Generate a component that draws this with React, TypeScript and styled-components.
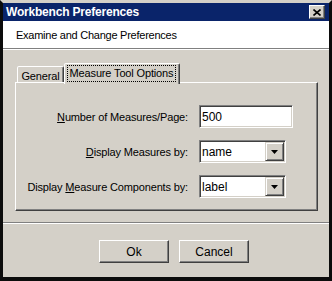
import React from "react";
import styled, { createGlobalStyle } from "styled-components";

const Global = createGlobalStyle`
  html, body { margin: 0; padding: 0; background: #d4d0c8; }
  body { font-family: "Liberation Sans", Arial, sans-serif; font-size: 11px; color: #000; letter-spacing: -0.15px; }
`;

const Window = styled.div`
  width: 332px;
  height: 281px;
  box-sizing: border-box;
  background: #d4d0c8;
  border-style: solid;
  border-width: 3px 3px 4px 3px;
  border-color: #d4d0c8 #0c0c0c #0c0c0c #0c0c0c;
  display: flex;
  flex-direction: column;
`;

const TitleBar = styled.div`
  height: 18px;
  flex: none;
  background: #0a246a;
  color: #fff;
  display: flex;
  align-items: center;
  justify-content: space-between;
  padding: 0 4px 0 3px;
  font-weight: bold;
  font-size: 12px;
  letter-spacing: -0.2px;
`;

const CloseButton = styled.div`
  width: 16px;
  height: 14px;
  box-sizing: border-box;
  background: #d4d0c8;
  border-style: solid;
  border-width: 1px;
  border-color: #fff #404040 #404040 #fff;
  box-shadow: inset -1px -1px #808080;
  display: flex;
  align-items: center;
  justify-content: center;
`;

const Header = styled.div`
  height: 28px;
  flex: none;
  box-sizing: border-box;
  background: #fff;
  padding-left: 13px;
  display: flex;
  align-items: center;
  border-bottom: 1px solid #808080;
  box-shadow: 0 1px #fff;
  letter-spacing: -0.25px;
`;

const Content = styled.div`
  padding: 14px 11px 0 12px;
  display: flex;
  flex-direction: column;
`;

const TabRow = styled.div`
  height: 19px;
  padding-left: 2px;
  display: flex;
  align-items: flex-end;
`;

const Tab = styled.div<{ $active?: boolean }>`
  box-sizing: border-box;
  height: ${(p) => (p.$active ? "21px" : "16px")};
  margin-bottom: ${(p) => (p.$active ? "-2px" : "0")};
  position: relative;
  z-index: ${(p) => (p.$active ? 1 : 0)};
  background: #d4d0c8;
  border-style: solid;
  border-width: 1px 1px 0 1px;
  border-color: #fff #404040 transparent #fff;
  border-radius: 2px 2px 0 0;
  box-shadow: inset -1px 0 #808080;
  display: flex;
  align-items: flex-start;
  justify-content: center;
  padding: ${(p) => (p.$active ? "2px 2px 0 1px" : "3px 4px 0 4px")};
  ${(p) => (p.$active ? "width: 116px;" : "width: 47px;")}
`;

const FocusLabel = styled.span`
  outline: 1px dotted #000;
  outline-offset: 0;
  padding: 1px 2px 1px 2px;
  line-height: 13px;
`;

const TabLabel = styled.span`
  line-height: 13px;
`;

const Panel = styled.div`
  height: 129px;
  box-sizing: border-box;
  border-style: solid;
  border-width: 1px;
  border-color: #fff #404040 #404040 #fff;
  box-shadow: inset -1px -1px #808080;
  padding-top: 22px;
  display: grid;
  grid-template-columns: 172px auto;
  grid-auto-rows: 23px;
  column-gap: 11px;
  row-gap: 12px;
  align-content: start;
`;

const Label = styled.label`
  justify-self: end;
  align-self: center;
  white-space: nowrap;
  & u { text-decoration: underline; }
`;

const Sunken = styled.div<{ $w: number }>`
  width: ${(p) => p.$w}px;
  height: 23px;
  box-sizing: border-box;
  background: #fff;
  border-style: solid;
  border-width: 1px;
  border-color: #808080 #fff #fff #808080;
  box-shadow: inset 1px 1px #404040, inset -1px -1px #d4d0c8;
  display: flex;
  align-items: center;
  padding: 1px 1px 1px 2px;
`;

const FieldText = styled.span`
  flex: 1;
  font-size: 12px;
  letter-spacing: 0;
`;

const ArrowButton = styled.div`
  width: 19px;
  height: 19px;
  box-sizing: border-box;
  background: #d4d0c8;
  border-style: solid;
  border-width: 1px;
  border-color: #d4d0c8 #404040 #404040 #d4d0c8;
  box-shadow: inset 1px 1px #fff, inset -1px -1px #808080;
  display: flex;
  align-items: center;
  justify-content: center;
`;

const Separator = styled.div`
  margin-top: 11px;
  border-top: 1px solid #808080;
  border-bottom: 1px solid #fff;
`;

const ButtonRow = styled.div`
  margin-top: 16px;
  padding-left: 96px;
  display: flex;
  gap: 10px;
`;

const Button = styled.div`
  width: 70px;
  height: 23px;
  box-sizing: border-box;
  background: #d4d0c8;
  border-style: solid;
  border-width: 1px;
  border-color: #fff #404040 #404040 #fff;
  box-shadow: inset -1px -1px #808080;
  display: flex;
  align-items: center;
  justify-content: center;
  font-size: 12px;
  letter-spacing: 0;
`;

const Arrow = () => (
  <svg width="7" height="4" viewBox="0 0 7 4">
    <path d="M0 0h7L3.5 4z" fill="#000" />
  </svg>
);

const Select = ({ value }: { value: string }) => (
  <Sunken $w={87}>
    <FieldText>{value}</FieldText>
    <ArrowButton>
      <Arrow />
    </ArrowButton>
  </Sunken>
);

export default function App() {
  return (
    <>
      <Global />
      <Window>
        <TitleBar>
          <span>Workbench Preferences</span>
          <CloseButton>
            <svg width="8" height="7" viewBox="0 0 8 7">
              <path d="M0.5 0.5L7.5 6.5M7.5 0.5L0.5 6.5" stroke="#000" strokeWidth="1.6" />
            </svg>
          </CloseButton>
        </TitleBar>
        <Header>Examine and Change Preferences</Header>
        <Content>
          <TabRow>
            <Tab>
              <TabLabel>General</TabLabel>
            </Tab>
            <Tab $active>
              <FocusLabel>Measure Tool Options</FocusLabel>
            </Tab>
          </TabRow>
          <Panel>
            <Label>
              <u>N</u>umber of Measures/Page:
            </Label>
            <Sunken $w={94}>
              <FieldText>500</FieldText>
            </Sunken>
            <Label>
              <u>D</u>isplay Measures by:
            </Label>
            <Select value="name" />
            <Label>
              Display <u>M</u>easure Components by:
            </Label>
            <Select value="label" />
          </Panel>
        </Content>
        <Separator />
        <ButtonRow>
          <Button>Ok</Button>
          <Button>Cancel</Button>
        </ButtonRow>
      </Window>
    </>
  );
}
